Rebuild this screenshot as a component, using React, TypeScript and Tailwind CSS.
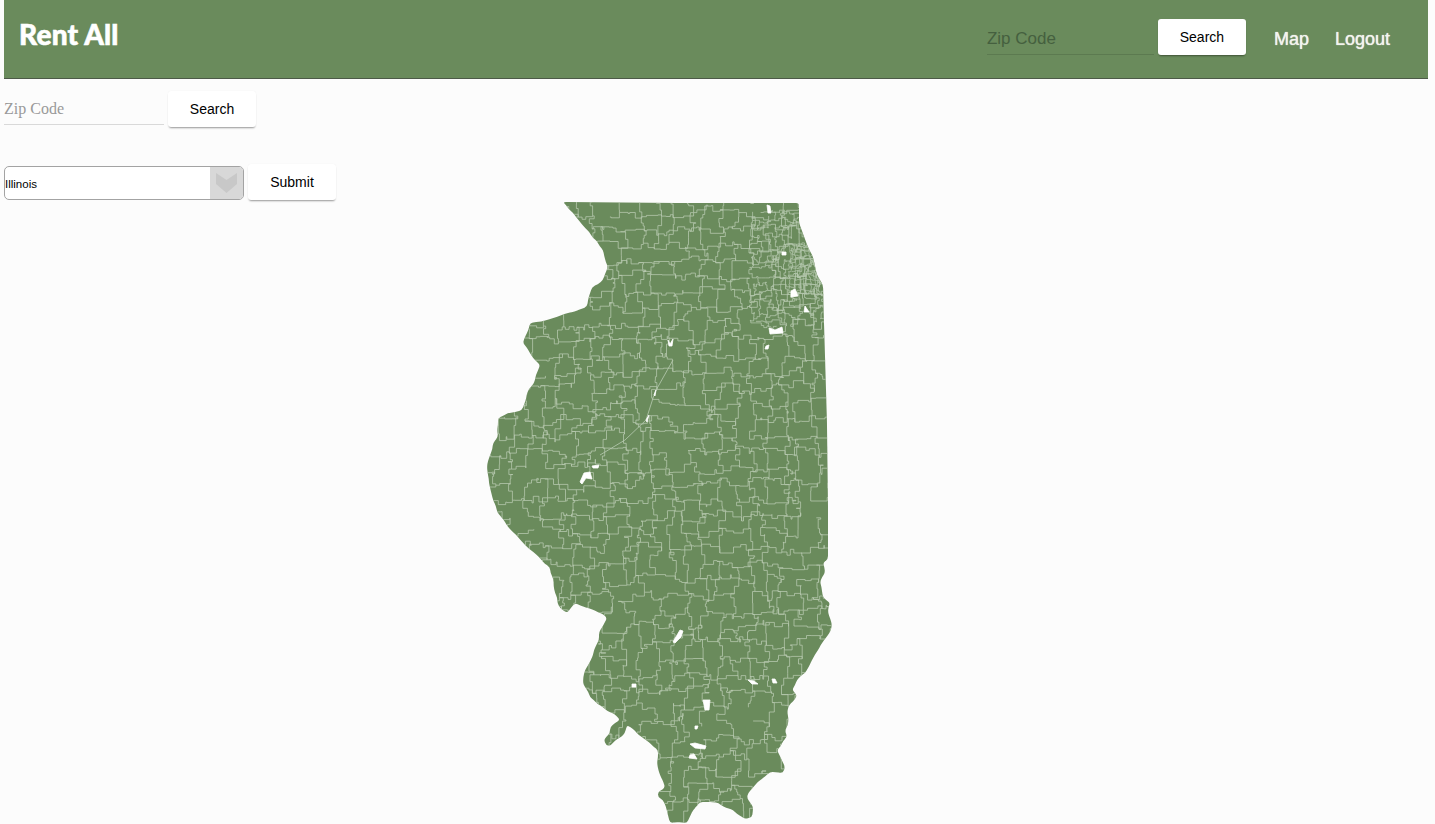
const STRAIGHT_SIDE: [number, number][] = [
  [563, 202], [680, 203], [799, 203], [799, 223], [808, 247], [813, 257], [817, 275], [823, 285], [824, 323], [827, 423], [828, 510], [828, 559],
];

const COAST: [number, number][] = [
  [823, 563], [825, 573], [820, 582], [823, 597], [830, 603], [828, 613], [832, 625], [828, 635], [822, 643], [818, 650], [812, 660], [805, 673], [797, 680], [792, 690], [797, 695], [788, 707], [788, 725], [785, 730], [787, 737], [777, 750], [785, 767], [783, 773], [770, 772], [760, 780], [748, 793], [747, 798], [753, 807], [752, 817], [745, 819], [733, 810], [713, 802], [700, 802], [693, 810], [687, 823], [677, 822], [670, 823], [663, 800], [658, 797], [658, 792], [665, 788], [657, 763], [658, 750], [643, 738], [627, 725], [625, 733], [617, 739], [610, 746], [606, 745], [604, 740], [610, 733], [610, 727], [620, 720], [603, 707], [590, 697], [583, 683], [585, 670], [593, 655], [599, 640], [599, 632], [607, 618], [597, 612], [575, 603], [567, 613], [560, 608], [555, 593], [550, 567], [527, 547], [513, 532], [497, 512], [493, 500], [487, 467], [493, 443], [498, 437], [498, 418], [508, 413], [522, 410], [527, 393], [535, 380], [540, 365], [530, 353], [523, 343], [530, 323], [547, 320], [567, 313], [587, 307], [592, 287], [603, 280], [608, 267], [603, 250], [593, 238], [580, 222], [566, 205],
];

const LAKES = [
  "767,205 770,206 771,213 768,213",
  "782,252 786,252 786,255 782,255",
  "791,291 795,289 798,296 791,297",
  "804,312 805,306 809,312",
  "769,328 775,330 782,327 783,333 770,334",
  "766,346 769,345 768,349 765,349",
  "668,340 670,344 673,339 672,346 669,346",
  "654,395 656,390 655,396",
  "646,420 649,415 647,422",
  "580,482 584,473 590,472 592,479 586,478 582,484",
  "592,466 599,465 598,468 593,468",
  "673,642 680,630 683,631 681,637 675,643",
  "632,684 636,684 636,687 632,687",
  "748,680 754,681 758,684 752,684",
  "772,679 775,679 777,683 773,683",
  "703,700 710,700 709,710 705,710",
  "695,726 698,726 697,729 695,729",
  "690,744 695,743 706,746 705,749 695,748",
  "690,755 694,754 697,759 689,758",
];

// Seeded so the township lines come out the same on every render
function makeRandom(seed: number) {
  return () => {
    seed = (seed + 0x6d2b79f5) | 0;
    let t = Math.imul(seed ^ (seed >>> 15), 1 | seed);
    t = (t + Math.imul(t ^ (t >>> 7), 61 | t)) ^ t;
    return ((t ^ (t >>> 14)) >>> 0) / 4294967296;
  };
}

// Break the river side of the state into short uneven pieces, then round every corner
function outlinePath() {
  const rand = makeRandom(3);
  const pts: [number, number][] = [...STRAIGHT_SIDE];
  let prev = STRAIGHT_SIDE[STRAIGHT_SIDE.length - 1];
  for (const p of COAST) {
    const len = Math.hypot(p[0] - prev[0], p[1] - prev[1]);
    const parts = Math.max(1, Math.round(len / 6));
    for (let i = 1; i < parts; i++) {
      pts.push([
        prev[0] + ((p[0] - prev[0]) * i) / parts + (rand() - 0.5) * 2,
        prev[1] + ((p[1] - prev[1]) * i) / parts + (rand() - 0.5) * 2,
      ]);
    }
    pts.push(p);
    prev = p;
  }
  let d = "";
  pts.forEach((v, i) => {
    const a = pts[(i + pts.length - 1) % pts.length];
    const b = pts[(i + 1) % pts.length];
    const toward = (o: [number, number]) => {
      const len = Math.hypot(o[0] - v[0], o[1] - v[1]);
      const r = Math.min(3, len / 2) / len;
      return `${(v[0] + (o[0] - v[0]) * r).toFixed(1)} ${(v[1] + (o[1] - v[1]) * r).toFixed(1)}`;
    };
    d += `${i === 0 ? "M" : "L"}${toward(a)}Q${v[0].toFixed(1)} ${v[1].toFixed(1)} ${toward(b)}`;
  });
  return d + "Z";
}

function gridLines(
  seed: number,
  x0: number,
  y0: number,
  cols: number,
  rows: number,
  cell: number,
  keep: number,
  wiggle: number,
) {
  const rand = makeRandom(seed);
  const points: [number, number][][] = [];
  for (let r = 0; r <= rows; r++) {
    points.push([]);
    for (let c = 0; c <= cols; c++) {
      points[r].push([
        x0 + c * cell + (rand() - 0.5) * cell * 0.75,
        y0 + r * cell + (rand() - 0.5) * cell * 0.75,
      ]);
    }
  }
  const edge = (a: [number, number], b: [number, number]) => {
    const steps = 2 + Math.floor(rand() * 3);
    let d = `M${a[0].toFixed(1)} ${a[1].toFixed(1)}`;
    let last = a;
    for (let i = 1; i <= steps; i++) {
      const t = i / steps;
      const end = i === steps;
      const x = a[0] + (b[0] - a[0]) * t + (end ? 0 : (rand() - 0.5) * wiggle);
      const y = a[1] + (b[1] - a[1]) * t + (end ? 0 : (rand() - 0.5) * wiggle);
      // stepped corners, the way survey boundaries run
      d += `L${x.toFixed(1)} ${last[1].toFixed(1)}L${x.toFixed(1)} ${y.toFixed(1)}`;
      last = [x, y];
    }
    return d;
  };
  let out = "";
  for (let r = 0; r <= rows; r++) {
    for (let c = 0; c <= cols; c++) {
      if (c < cols && rand() < keep) out += edge(points[r][c], points[r][c + 1]);
      if (r < rows && rand() < keep) out += edge(points[r][c], points[r + 1][c]);
    }
  }
  return out;
}

const OUTLINE = outlinePath();
const TOWNSHIPS = gridLines(7, 480, 196, 23, 40, 16, 0.8, 7);
const NORTH_EAST = gridLines(11, 752, 212, 10, 14, 8, 0.72, 4);
const CHICAGO = gridLines(23, 790, 245, 8, 10, 5, 0.95, 1);

function Btn({ children }: { children: string }) {
  return (
    <button className="w-[88px] h-[36px] shrink-0 bg-white rounded-[3px] shadow-[0_2px_2px_-1px_rgba(0,0,0,0.4),0_0_1px_rgba(0,0,0,0.08)] text-[14px] text-black font-['Liberation_Sans',sans-serif]">
      {children}
    </button>
  );
}

export default function App() {
  return (
    <div className="h-[824px] overflow-hidden bg-[#fcfcfc] pl-[4px] pr-[7px] font-['Liberation_Sans',sans-serif]">
      <header className="h-[79px] bg-[#6a8b5c] border-b border-[#4d5a48] flex justify-between">
        <h1 className="ml-[15px] mt-[17px] text-[28px] leading-[34px] font-black text-white font-['Lato',sans-serif] tracking-[0.2px] [-webkit-text-stroke:0.6px_#ffffff]">
          Rent All
        </h1>
        <div className="flex items-start">
          <div className="mt-[24px] w-[167px] h-[31px] border-b border-[#5c7a50] text-[17px] leading-[30px] text-[#45603f]">
            Zip Code
          </div>
          <div className="mt-[19px] ml-[4px]">
            <Btn>Search</Btn>
          </div>
          <nav className="flex gap-[26px] ml-[28px] mr-[38px] mt-[28px] text-[18px] leading-[22px] text-[#f4f4ef] [text-shadow:0_0_1px_#fff]">
            <a>Map</a>
            <a>Logout</a>
          </nav>
        </div>
      </header>

      <div className="flex items-start mt-[12px] gap-[4px]">
        <div className="w-[160px] h-[34px] border-b border-[#d9d9d9] text-[16px] leading-[35px] text-[#999999] font-['Liberation_Serif',serif]">
          Zip Code
        </div>
        <Btn>Search</Btn>
      </div>

      <div className="flex items-end mt-[37px] gap-[4px]">
        <div className="w-[240px] h-[34px] flex items-stretch justify-between bg-white border border-[#a3a3a3] rounded-[5px] overflow-hidden">
          <span className="text-[11.5px] leading-[34px] text-black">Illinois</span>
          <span className="w-[33px] bg-[#d8d8d8] flex items-center justify-center">
            <svg width="21" height="20" viewBox="0 0 21 20">
              <path d="M0 0 L10.5 7 L21 0 V11 L10.5 20 L0 11 Z" fill="#c8c8c8" />
            </svg>
          </span>
        </div>
        <Btn>Submit</Btn>
      </div>

      <svg className="block mt-[1px]" width="1424" height="623" viewBox="4 201 1424 623">
        <defs>
          <clipPath id="state">
            <path d={OUTLINE} />
          </clipPath>
        </defs>
        <path d={OUTLINE} fill="#6a8b5c" />
        <g clipPath="url(#state)" fill="none" stroke="#b9cbb2">
          <path d={TOWNSHIPS} strokeWidth="0.75" />
          <path d={NORTH_EAST} strokeWidth="0.7" />
          <path d={CHICAGO} strokeWidth="0.6" />
          <path d="M673 360 L655 392 L646 420 L625 440 L600 455" strokeWidth="0.8" />
        </g>
        {LAKES.map((p) => (
          <polygon key={p} points={p} fill="#ffffff" stroke="#ffffff" strokeWidth="0.8" strokeLinejoin="round" />
        ))}
      </svg>
    </div>
  );
}
